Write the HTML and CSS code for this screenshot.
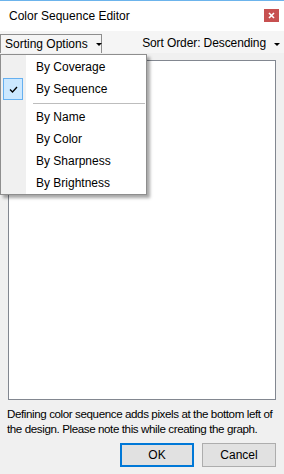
FILE: index.html
```html
<!DOCTYPE html>
<html>
<head>
<meta charset="utf-8">
<link rel="stylesheet" href="styles.css">
</head>
<body>
<div class="window">
  <div class="titlebar">
    <span class="title">Color Sequence Editor</span>
    <div class="close"><svg width="7" height="7" viewBox="0 0 7 7"><path d="M1 1L6 6M6 1L1 6" stroke="#fff" stroke-width="1.6"/></svg></div>
  </div>
  <div class="toolstrip">
    <div class="drop open">Sorting Options<span class="arrow"></span></div>
    <div class="drop right">Sort Order: Descending<span class="arrow"></span></div>
  </div>
  <div class="panel"></div>
  <p class="desc">Defining color sequence adds pixels at the bottom left of<br>the design. Please note this while creating the graph.</p>
  <div class="buttons">
    <button class="btn default">OK</button>
    <button class="btn">Cancel</button>
  </div>
  <div class="menu">
    <div class="item">By Coverage</div>
    <div class="item checked"><span class="check"><svg width="9" height="7" viewBox="0 0 9 7"><path d="M1 3.5L3.5 6L8 1" fill="none" stroke="#000" stroke-width="1.3"/></svg></span>By Sequence</div>
    <div class="sep"></div>
    <div class="item">By Name</div>
    <div class="item">By Color</div>
    <div class="item">By Sharpness</div>
    <div class="item">By Brightness</div>
  </div>
</div>
</body>
</html>
```
FILE: styles.css
```css
html, body {
  margin: 0;
  padding: 0;
}
* { box-sizing: border-box; }
body {
  width: 284px;
  height: 474px;
  overflow: hidden;
  background: #f0f0f0;
  font-family: "Liberation Sans", Arial, sans-serif;
  font-size: 12px;
  color: #000;
}
.window {
  position: relative;
  height: 474px;
  border-top: 1px solid #6cb4ec;
  background: #f0f0f0;
}
.titlebar {
  height: 30px;
  background: #fff;
  display: flex;
  align-items: center;
  justify-content: space-between;
  padding: 0 5px 0 9px;
}
.title {
  font-size: 12px;
  margin-top: -1px;
}
.close {
  width: 15px;
  height: 13px;
  background: #c75050;
  display: flex;
  align-items: center;
  justify-content: center;
  margin-top: -2px;
}
.close svg { display: block; }
.toolstrip {
  height: 22px;
  background: #f5f5f5;
  display: flex;
  align-items: flex-end;
  justify-content: space-between;
}
.drop {
  display: flex;
  align-items: center;
  height: 19px;
  padding: 0 4px;
  line-height: 19px;
  white-space: nowrap;
}
.drop .arrow {
  width: 0;
  height: 0;
  border-left: 3px solid transparent;
  border-right: 3px solid transparent;
  border-top: 3px solid #000;
  margin-left: 8px;
  margin-top: 1px;
}
.drop.open {
  border: 1px solid #8e8e8e;
  border-bottom: none;
  background: #f5f5f5;
  padding-left: 4px;
  width: 102px;
  position: relative;
  z-index: 3;
}
.drop.right {
  padding-right: 4px;
  letter-spacing: -0.1px;
}
.panel {
  height: 340px;
  margin: 7px 8px 0 8px;
  background: #fff;
  border: 1px solid #828790;
}
.desc {
  margin: 6px 6px 0 7px;
  line-height: 15px;
  font-size: 11.6px;
  letter-spacing: -0.4px;
  white-space: nowrap;
}
.buttons {
  display: flex;
  justify-content: flex-end;
  gap: 8px;
  margin: 7px 8px 0 0;
}
.btn {
  width: 74px;
  height: 24px;
  font-family: inherit;
  font-size: 12px;
  background: #e1e1e1;
  border: 1px solid #adadad;
  padding: 0;
  color: #000;
}
.btn.default {
  border: 2px solid #0078d7;
}
.menu {
  position: absolute;
  left: 0;
  top: 53px;
  width: 147px;
  padding: 1px 0 0;
  background: linear-gradient(to right, #f0f0f0 0, #f0f0f0 25px, #fff 25px);
  border: 1px solid #8e8e8e;
  box-shadow: 3px 3px 3px rgba(0,0,0,0.35);
  z-index: 2;
}
.item {
  position: relative;
  height: 22px;
  line-height: 22px;
  padding-left: 35px;
}
.check {
  position: absolute;
  left: 2px;
  top: 0;
  width: 20px;
  height: 22px;
  background: #cce8ff;
  border: 1px solid #66b0f0;
  display: flex;
  align-items: center;
  justify-content: center;
}
.sep {
  height: 1px;
  background: #bdbdbd;
  margin: 3px 1px 2px 32px;
}
```
